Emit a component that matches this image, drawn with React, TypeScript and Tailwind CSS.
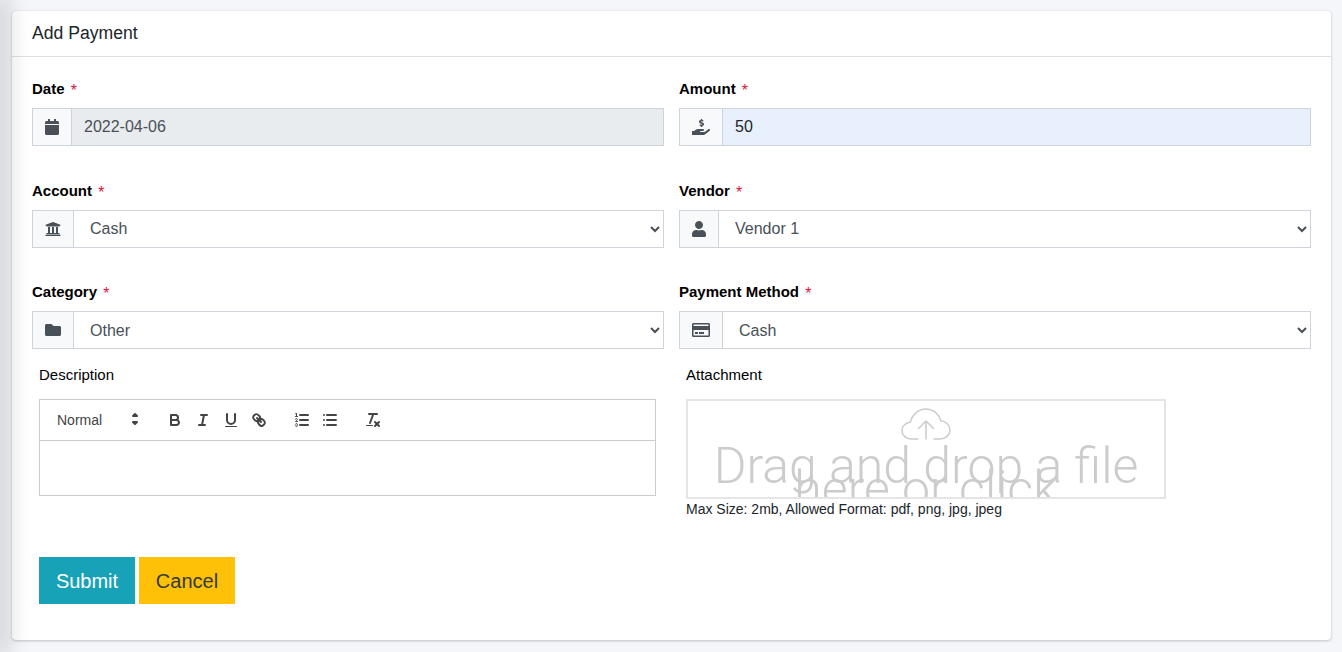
import type { ReactNode } from "react";
import {
  FaCalendar,
  FaFolder,
  FaHandHoldingUsd,
  FaRegCreditCard,
  FaUniversity,
  FaUser,
} from "react-icons/fa";

const sans = "font-['Liberation_Sans',Arial,sans-serif]";

type FieldProps = {
  label: string;
  icon: ReactNode;
  children: ReactNode;
  className?: string;
};

const Field = ({ label, icon, children, className }: FieldProps) => (
  <div className={className}>
    <label className="block h-[20px] text-[15px] leading-[16px] font-bold text-black">
      {label} <span className="ml-[2px] align-[-2px] text-base font-normal text-[#dc143c]">*</span>
    </label>
    <div className="mt-[9px] flex h-[38px] w-full">
      <span className="flex items-center border border-[#ced4da] bg-[#f8f9fa] px-3 text-[#495057]">
        {icon}
      </span>
      {children}
    </div>
  </div>
);

const Dropdown = ({ value }: { value: string }) => (
  <select
    defaultValue={value}
    className="-ml-px h-[38px] min-w-0 flex-1 border border-[#ced4da] bg-white pl-3 pr-2 text-base text-[#495057] outline-none"
  >
    <option>{value}</option>
  </select>
);

const ToolIcon = ({ children, className }: { children: ReactNode; className?: string }) => (
  <span className={`flex h-6 w-7 items-center justify-center ${className ?? ""}`}>
    <svg
      viewBox="0 0 18 18"
      className="h-[18px] w-[18px] fill-none stroke-[#444] stroke-2"
      strokeLinecap="round"
      strokeLinejoin="round"
    >
      {children}
    </svg>
  </span>
);

const Toolbar = () => (
  <div className="flex h-[42px] items-center border border-[#ccc] px-2">
    <div className="flex h-6 w-[98px] items-center justify-between pl-[9px] pr-[2px] text-sm text-[#444]">
      <span>Normal</span>
      <svg
        viewBox="0 0 18 18"
        className="h-[18px] w-[18px] fill-[#444] stroke-[#444] stroke-2"
        strokeLinejoin="round"
      >
        <polygon points="7 11 9 13 11 11 7 11" />
        <polygon points="7 5 9 3 11 5 7 5" />
      </svg>
    </div>
    <ToolIcon className="ml-[15px]">
      <path d="M5,4H9.5A2.5,2.5,0,0,1,12,6.5v0A2.5,2.5,0,0,1,9.5,9H5A0,0,0,0,1,5,9V4A0,0,0,0,1,5,4Z" />
      <path d="M5,9h5.5A2.5,2.5,0,0,1,13,11.5v0A2.5,2.5,0,0,1,10.5,14H5a0,0,0,0,1,0,0V9A0,0,0,0,1,5,9Z" />
    </ToolIcon>
    <ToolIcon>
      <line x1="7" x2="13" y1="4" y2="4" />
      <line x1="5" x2="11" y1="14" y2="14" />
      <line x1="8" x2="10" y1="14" y2="4" />
    </ToolIcon>
    <ToolIcon>
      <path d="M5,3V9a4.012,4.012,0,0,0,4,4H9a4.012,4.012,0,0,0,4-4V3" />
      <rect height="1" rx="0.5" ry="0.5" width="12" x="3" y="15" className="fill-[#444] stroke-none" />
    </ToolIcon>
    <ToolIcon>
      <line x1="7" x2="11" y1="7" y2="11" />
      <path d="M8.9,4.577a3.476,3.476,0,0,1,.36,4.679A3.476,3.476,0,0,1,4.577,8.9C3.185,7.5,2.035,6.4,4.217,4.217S7.5,3.185,8.9,4.577Z" />
      <path d="M13.423,9.1a3.476,3.476,0,0,0-4.679-.36,3.476,3.476,0,0,0,.36,4.679c1.392,1.392,2.5,2.542,4.679.36S14.815,10.5,13.423,9.1Z" />
    </ToolIcon>
    <ToolIcon className="ml-[15px]">
      <line x1="7" x2="15" y1="4" y2="4" />
      <line x1="7" x2="15" y1="9" y2="9" />
      <line x1="7" x2="15" y1="14" y2="14" />
      <line x1="2.5" x2="4.5" y1="5.5" y2="5.5" className="stroke-1" />
      <path d="M3.5,6A0.5,0.5,0,0,1,3,5.5V3.085l-0.276.138A0.5,0.5,0,0,1,2.053,3c-0.124-.247-0.023-0.324.224-0.447l1-.5A0.5,0.5,0,0,1,4,2.5v3A0.5,0.5,0,0,1,3.5,6Z" className="fill-[#444] stroke-none" />
      <path d="M4.5,10.5h-2c0-.234,1.85-1.076,1.85-2.234A0.959,0.959,0,0,0,2.5,8.156" className="stroke-1" />
      <path d="M2.5,14.846a0.959,0.959,0,0,0,1.85-.109A0.7,0.7,0,0,0,3.75,14a0.688,0.688,0,0,0,.6-0.736,0.959,0.959,0,0,0-1.85-.109" className="stroke-1" />
    </ToolIcon>
    <ToolIcon>
      <line x1="6" x2="15" y1="4" y2="4" />
      <line x1="6" x2="15" y1="9" y2="9" />
      <line x1="6" x2="15" y1="14" y2="14" />
      <line x1="3" x2="3" y1="4" y2="4" />
      <line x1="3" x2="3" y1="9" y2="9" />
      <line x1="3" x2="3" y1="14" y2="14" />
    </ToolIcon>
    <ToolIcon className="ml-[15px]">
      <line x1="5" x2="13" y1="3" y2="3" />
      <line x1="6" x2="9.35" y1="12" y2="3" />
      <line x1="11" x2="15" y1="11" y2="15" />
      <line x1="15" x2="11" y1="11" y2="15" />
      <rect height="1" rx="0.5" ry="0.5" width="7" x="2" y="14" className="fill-[#444] stroke-none" />
    </ToolIcon>
  </div>
);

export default function App() {
  return (
    <div className={`relative min-h-screen overflow-hidden bg-[#f4f6f9] pt-[11px] pr-[11px] pl-[12px] ${sans}`}>
      <div className="h-[629px] rounded bg-white shadow-[0_0_1px_rgba(0,0,0,0.125),0_1px_3px_rgba(0,0,0,0.2)]">
        <div className="flex h-[46px] items-center border-b border-[#dfdfdf] pl-5 text-[17.6px] text-[#212529]">
          Add Payment
        </div>

        <div className="grid grid-cols-2 gap-x-[15px] px-5 pt-[22px]">
          <Field label="Date" icon={<FaCalendar className="h-4 w-[14px]" />} className="pb-[34.5px]">
            <div className="-ml-px flex h-[38px] flex-1 items-center border border-[#ced4da] bg-[#e9ecef] pl-3 text-base text-[#495057]">
              2022-04-06
            </div>
          </Field>
          <Field label="Amount" icon={<FaHandHoldingUsd className="h-4 w-[18px]" />}>
            <div className="-ml-px flex h-[38px] flex-1 items-center border border-[#ced4da] bg-[#e8f0fe] pl-3 text-base text-[#212529]">
              50
            </div>
          </Field>
          <Field label="Account" icon={<FaUniversity className="h-4 w-4" />} className="pb-[34.5px]">
            <Dropdown value="Cash" />
          </Field>
          <Field label="Vendor" icon={<FaUser className="h-4 w-[14px]" />}>
            <Dropdown value="Vendor 1" />
          </Field>
          <Field label="Category" icon={<FaFolder className="h-4 w-4" />}>
            <Dropdown value="Other" />
          </Field>
          <Field label="Payment Method" icon={<FaRegCreditCard className="h-4 w-[18px]" />}>
            <Dropdown value="Cash" />
          </Field>
        </div>

        <div className="grid grid-cols-2 gap-x-[15px] px-5 pt-[16px]">
          <div className="px-[7px]">
            <label className="block h-[20px] text-[15px] leading-[20px] text-black">Description</label>
            <div className="mt-[14px] w-[617px]">
              <Toolbar />
              <div className="h-[55px] border border-t-0 border-[#ccc]" />
            </div>
          </div>
          <div className="px-[7px]">
            <label className="block h-[20px] text-[15px] leading-[20px] text-black">Attachment</label>
            <div className="mt-[14px] flex h-[100px] w-[480px] flex-col items-center overflow-hidden border-2 border-[#e5e5e5] font-['Roboto',sans-serif] font-light text-[#ccc]">
              <svg viewBox="0 0 50 32" className="mt-[7px] h-[32px] w-[50px] shrink-0 fill-none stroke-[#ccc] stroke-[1.5]" strokeLinecap="round" strokeLinejoin="round">
                <path d="M17 31H11C5.5 31 1 27.4 1 22.5c0-4.6 3.8-8 8.4-8.2C11 7 17.2 1 25 1c7.2 0 13 5 14.8 11.7 5.2.4 9.2 4.4 9.2 9.3 0 5-4.4 9-9.8 9H33" />
                <path d="M25 31V13M17.5 20.5 25 13l7.5 7.5" />
              </svg>
              <div className="mt-[15px] w-[440px] shrink-0 text-center text-[50px] leading-[23px]">
                Drag and drop a file here or click
              </div>
            </div>
            <p className="text-sm leading-[20px] text-[#212529]">
              Max Size: 2mb, Allowed Format: pdf, png, jpg, jpeg
            </p>
          </div>
        </div>

        <div className="mt-[38px] flex gap-1 px-[27px]">
          <button type="button" className="h-[47px] w-[96px] bg-[#17a2b8] text-[20px] text-white">
            Submit
          </button>
          <button type="button" className="h-[47px] w-[96px] bg-[#ffc107] text-[20px] text-[#343a40]">
            Cancel
          </button>
        </div>
      </div>

      {/* sidebar shadow falls over the page content */}
      <div className="pointer-events-none absolute inset-y-0 -left-px w-px shadow-[0_0_24px_5px_rgba(0,0,0,0.28)]" />
    </div>
  );
}
